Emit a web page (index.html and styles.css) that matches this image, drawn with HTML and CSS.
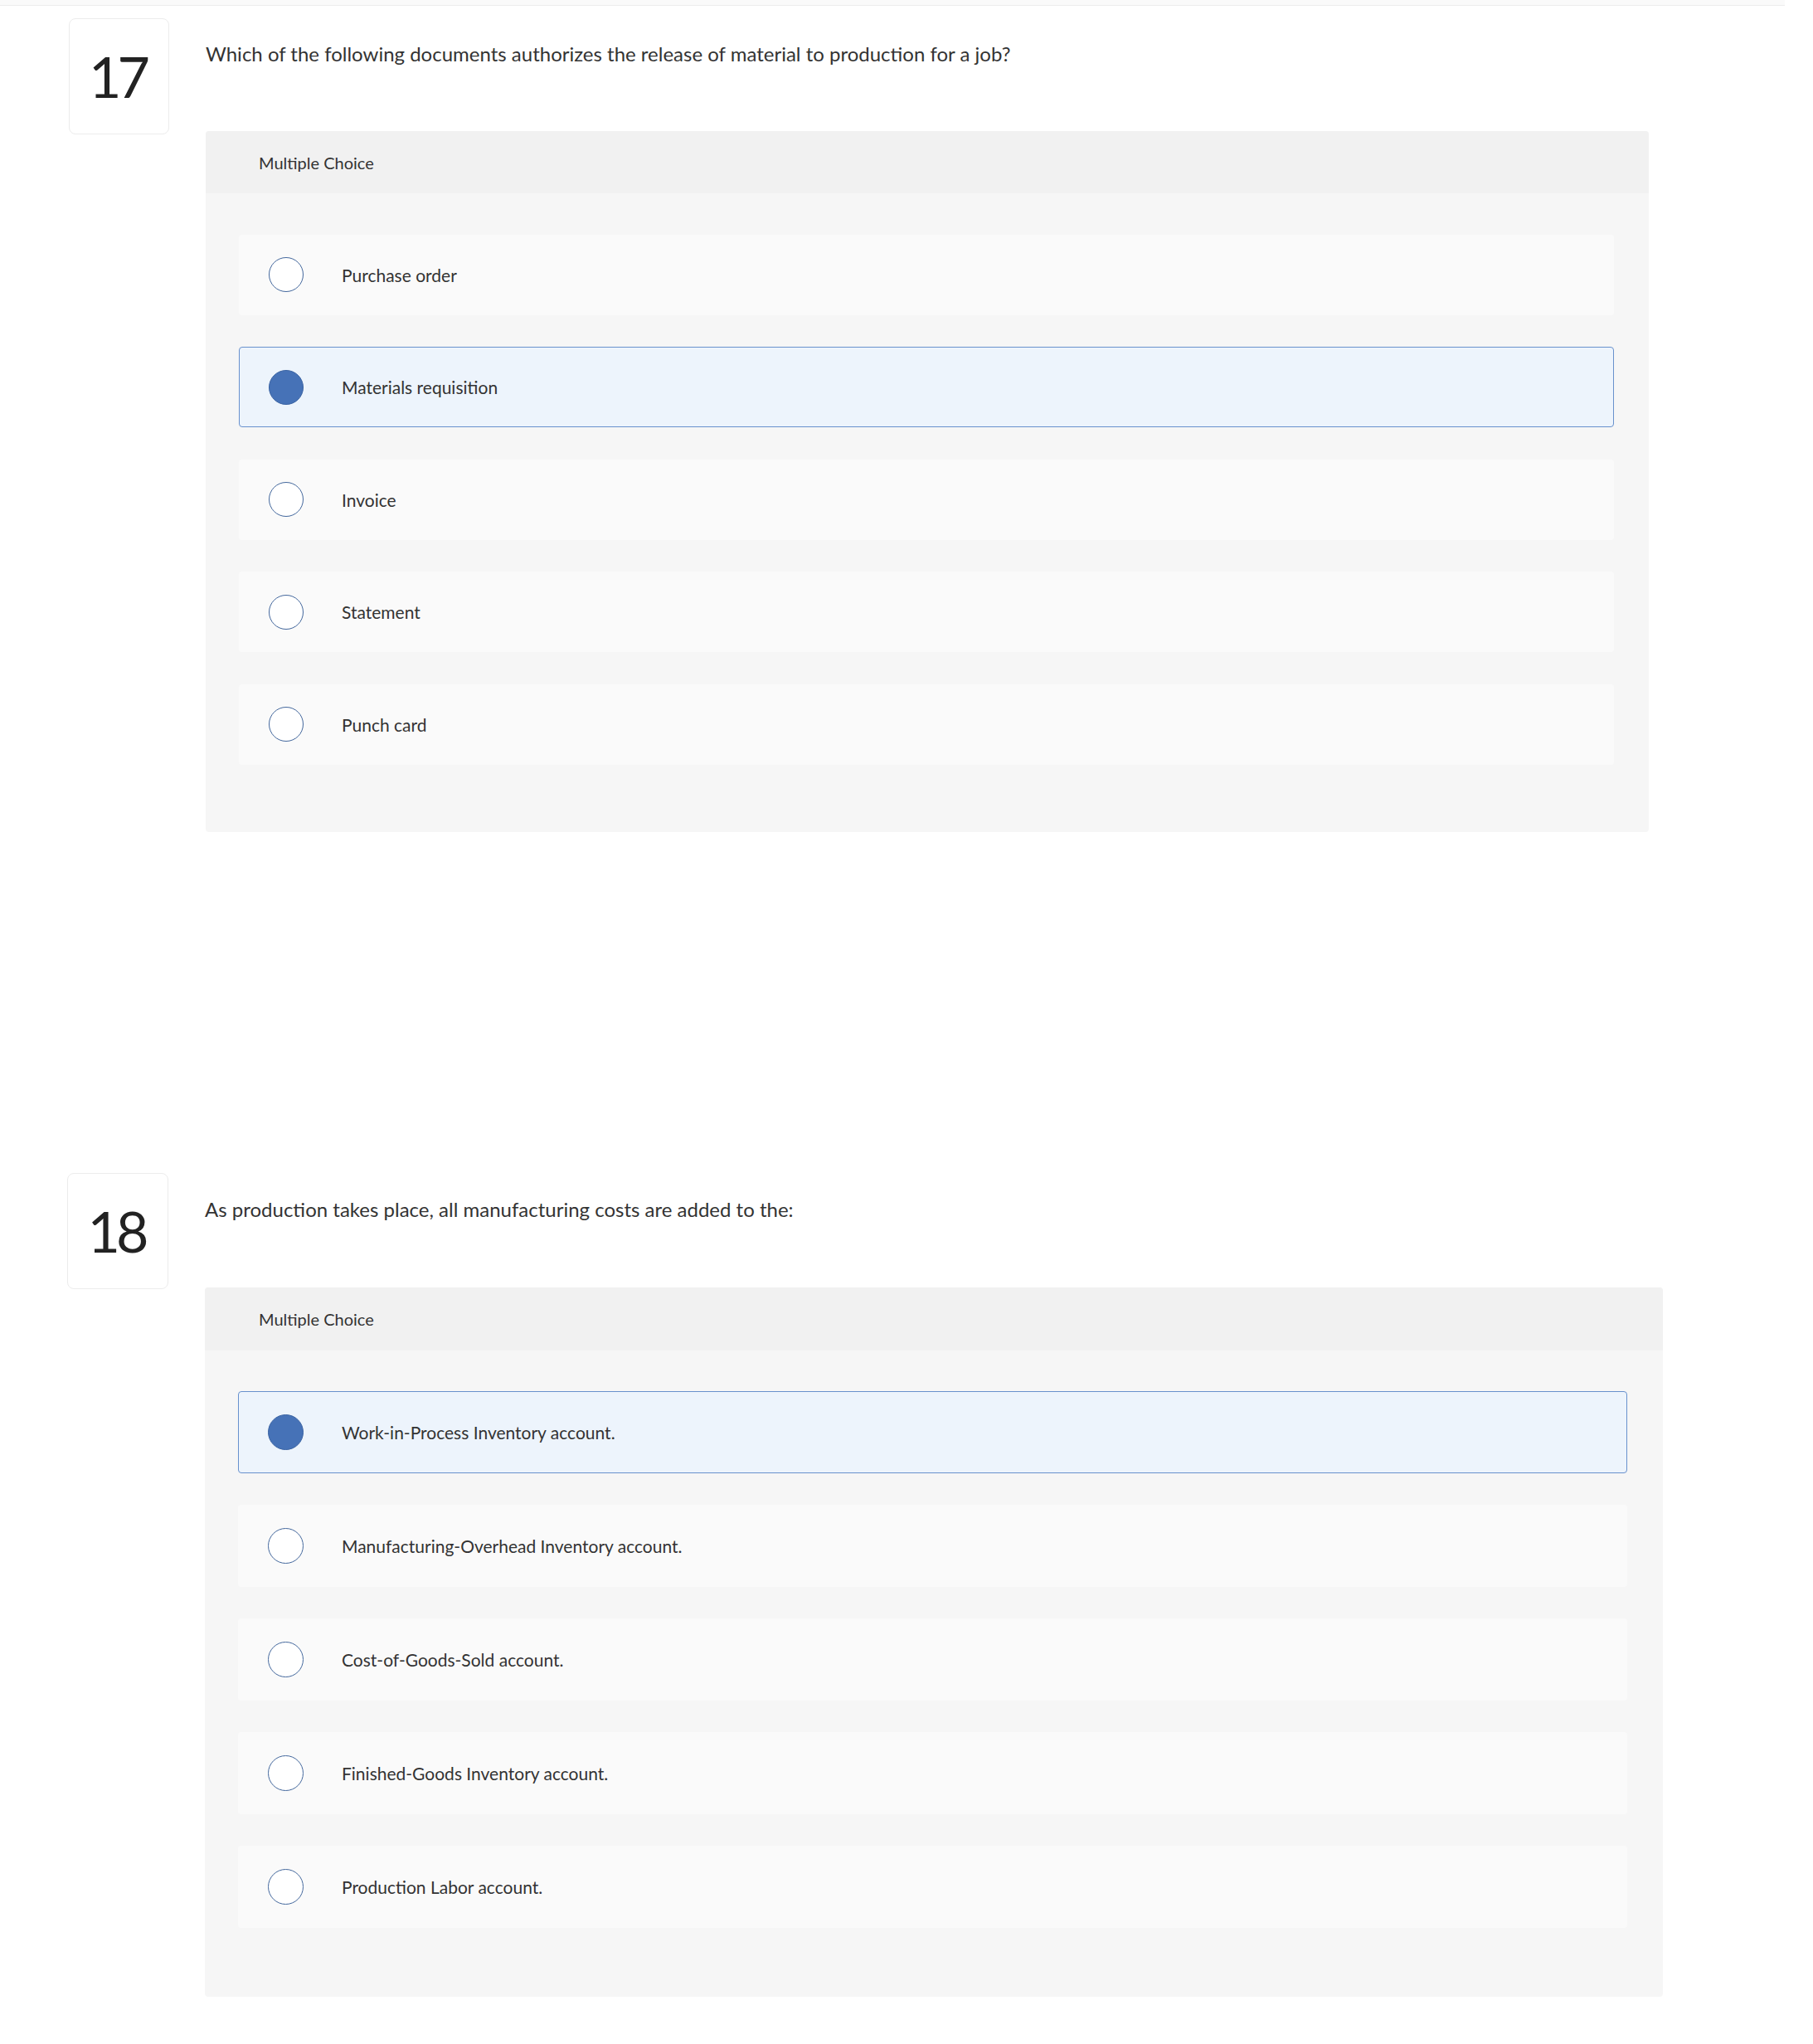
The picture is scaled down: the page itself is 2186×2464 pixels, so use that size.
FILE: index.html
```html
<!DOCTYPE html>
<html lang="en">
<head>
  <meta charset="UTF-8"/>
  <meta name="viewport" content="width=device-width, initial-scale=1"/>
  <title>Multiple Choice Questions</title>
  <link rel="stylesheet" href="styles.css">
</head>
<body>
  <div class="topbar"></div>

  <!-- question 17 -->
  <section class="question q17">
    <div class="qnum">17</div>
    <div class="qbody">
      <p class="prompt">Which of the following documents authorizes the release of material to production for a job?</p>
      <div class="mc">
        <div class="mc-head">Multiple Choice</div>
        <ul class="choices">
          <li class="choice"><span class="radio"></span><span class="label">Purchase order</span></li>
          <li class="choice selected"><span class="radio"></span><span class="label">Materials requisition</span></li>
          <li class="choice"><span class="radio"></span><span class="label">Invoice</span></li>
          <li class="choice"><span class="radio"></span><span class="label">Statement</span></li>
          <li class="choice"><span class="radio"></span><span class="label">Punch card</span></li>
        </ul>
      </div>
    </div>
  </section>

  <!-- question 18 -->
  <section class="question q18">
    <div class="qnum">18</div>
    <div class="qbody">
      <p class="prompt">As production takes place, all manufacturing costs are added to the:</p>
      <div class="mc">
        <div class="mc-head">Multiple Choice</div>
        <ul class="choices">
          <li class="choice selected"><span class="radio"></span><span class="label">Work-in-Process Inventory account.</span></li>
          <li class="choice"><span class="radio"></span><span class="label">Manufacturing-Overhead Inventory account.</span></li>
          <li class="choice"><span class="radio"></span><span class="label">Cost-of-Goods-Sold account.</span></li>
          <li class="choice"><span class="radio"></span><span class="label">Finished-Goods Inventory account.</span></li>
          <li class="choice"><span class="radio"></span><span class="label">Production Labor account.</span></li>
        </ul>
      </div>
    </div>
  </section>
</body>
</html>
```

FILE: styles.css
```css
/* 1. Page */
html, body {
  margin: 0;
  padding: 0;
  background: #fff;
  color: #333;
  font-family: Lato, "Open Sans", sans-serif;
}

.topbar {
  width: 2152px;
  height: 6px;
  background: #fafafa;
  border-bottom: 1px solid #ededed;
}

/* 2. Question row: number tile + body */
.question {
  display: flex;
  align-items: flex-start;
  gap: 44px;
}
.q17 { margin-top: 15px; padding-left: 83px; }
.q18 { margin-top: 411px; padding-left: 81px; }

.qnum {
  flex-shrink: 0;
  box-sizing: border-box;
  width: 121px;
  height: 140px;
  display: flex;
  align-items: center;
  justify-content: center;
  padding-right: 4px;
  border: 1px solid #ececec;
  border-radius: 8px;
  background: #fff;
  color: #222;
  font-size: 68px;
  letter-spacing: -5px;
  line-height: 1;
}
.q18 .qnum { width: 122px; }

.qbody { padding-top: 26px; }
.q18 .qbody { padding-top: 27px; }

.prompt {
  margin: 0;
  font-size: 24px;
  line-height: 34px;
  color: #333;
}

/* 3. Multiple choice panel */
.mc {
  margin-top: 76px;
  width: 1740px;
  padding-bottom: 81px;
  background: #f6f6f6;
  border-radius: 4px;
}
.q18 .mc {
  margin-top: 77px;
  width: 1758px;
  padding-bottom: 83px;
}

.mc-head {
  height: 75px;
  display: flex;
  align-items: center;
  padding-left: 64px;
  background: #f1f1f1;
  border-radius: 4px 4px 0 0;
  font-size: 20px;
  color: #333;
}
.q18 .mc-head { height: 76px; padding-left: 65px; }

.choices {
  list-style: none;
  margin: 0;
  padding: 49.5px 42px 0 40px;
  display: flex;
  flex-direction: column;
  gap: 38.5px;
}
.q18 .choices {
  padding: 49px 43px 0 40px;
  gap: 38px;
}

/* 4. One answer row */
.choice {
  box-sizing: border-box;
  height: 97px;
  display: flex;
  align-items: center;
  padding-left: 35px;
  background: #fafafa;
  border: 1px solid transparent;
  border-radius: 4px;
}
.q18 .choice { height: 99px; }

.choice.selected {
  background: #edf4fc;
  border-color: #6891cd;
}

.radio {
  flex-shrink: 0;
  box-sizing: border-box;
  width: 42px;
  height: 42px;
  margin-right: 46px;
  border: 1.5px solid #44689d;
  border-radius: 50%;
  background: #fff;
}
.q18 .radio { width: 43px; height: 43px; }

.choice.selected .radio {
  background: #4672b7;
  border-color: #3a63a3;
}

.label {
  font-size: 21px;
  color: #333;
}
```
